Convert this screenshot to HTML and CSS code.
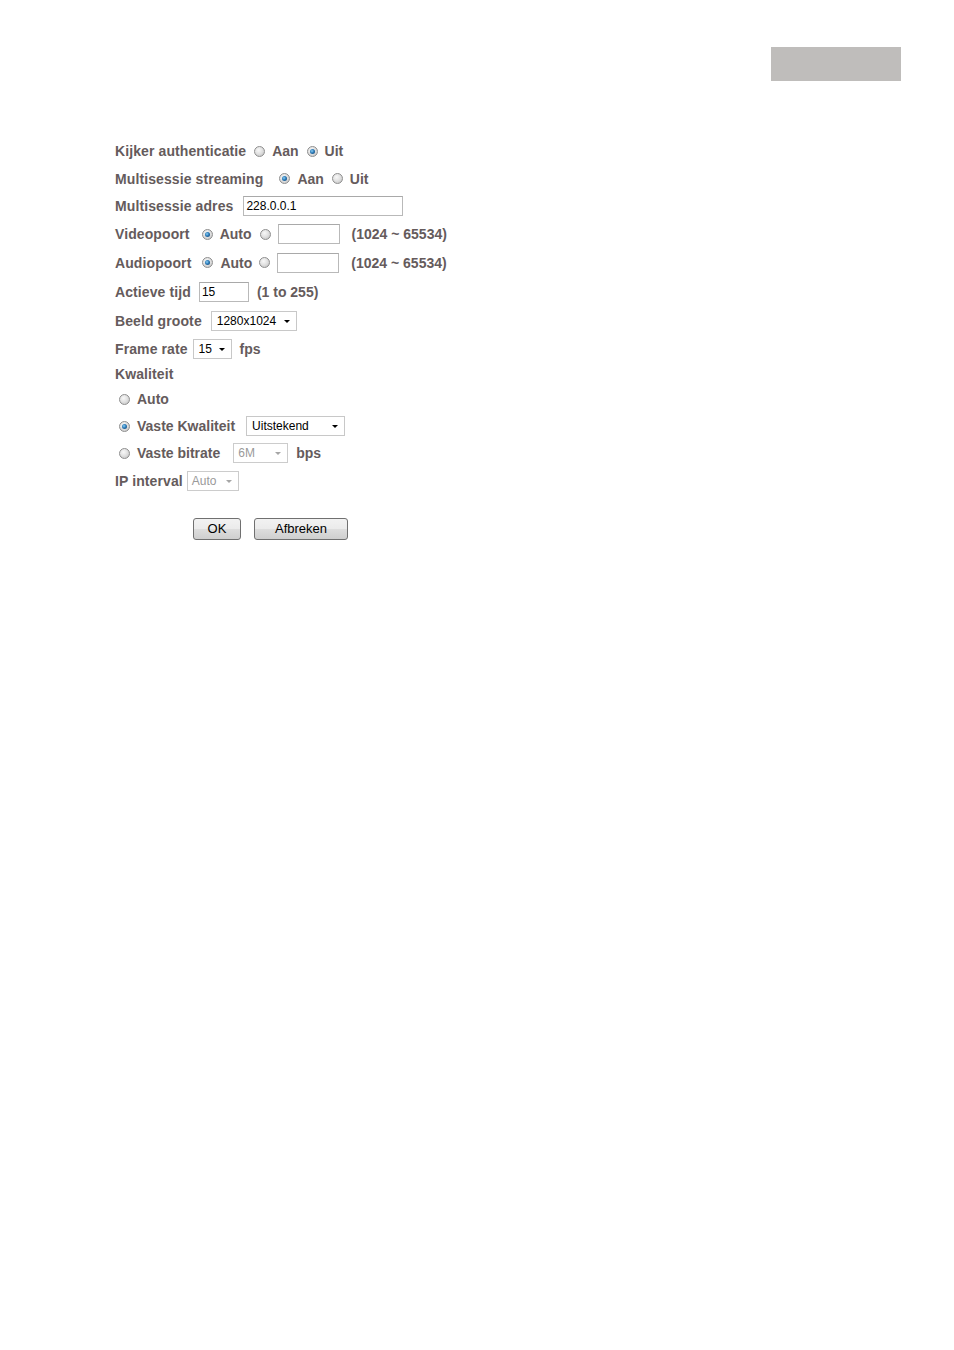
FILE: index.html
```html
<!DOCTYPE html>
<html>
<head>
<meta charset="utf-8">
<title>Streaming</title>
<link rel="stylesheet" href="styles.css">
</head>
<body>
<div class="topbar"><div class="graybox"></div></div>
<div class="form">
  <div class="row r1">
    <span class="lbl">Kijker authenticatie</span>
    <span class="radio m8"></span><span class="opt">Aan</span>
    <span class="radio on m8"></span><span class="opt">Uit</span>
  </div>
  <div class="row r2">
    <span class="lbl">Multisessie streaming</span>
    <span class="radio on m16"></span><span class="opt">Aan</span>
    <span class="radio m8"></span><span class="opt">Uit</span>
  </div>
  <div class="row r3">
    <span class="lbl">Multisessie adres</span>
    <span class="field w160 m10">228.0.0.1</span>
  </div>
  <div class="row r4">
    <span class="lbl">Videopoort</span>
    <span class="radio on m12"></span><span class="opt">Auto</span>
    <span class="radio m8"></span>
    <span class="field w62 m7"></span>
    <span class="opt m12">(1024 ~ 65534)</span>
  </div>
  <div class="row r5">
    <span class="lbl">Audiopoort</span>
    <span class="radio on m11"></span><span class="opt">Auto</span>
    <span class="radio m7"></span>
    <span class="field w62 m7"></span>
    <span class="opt m12">(1024 ~ 65534)</span>
  </div>
  <div class="row r6">
    <span class="lbl">Actieve tijd</span>
    <span class="field w49 m8">15</span>
    <span class="opt m8">(1 to 255)</span>
  </div>
  <div class="row r7">
    <span class="lbl">Beeld groote</span>
    <span class="select w85 m9"><span class="stext">1280x1024</span><span class="arrow"></span></span>
  </div>
  <div class="row r8">
    <span class="lbl">Frame rate</span>
    <span class="select w38 m5"><span class="stext">15</span><span class="arrow"></span></span>
    <span class="opt m8">fps</span>
  </div>
  <div class="row r9">
    <span class="lbl">Kwaliteit</span>
  </div>
  <div class="row r10 sub">
    <span class="radio"></span><span class="opt">Auto</span>
  </div>
  <div class="row r11 sub">
    <span class="radio on"></span><span class="opt">Vaste Kwaliteit</span>
    <span class="select w98 m11"><span class="stext">Uitstekend</span><span class="arrow"></span></span>
  </div>
  <div class="row r12 sub">
    <span class="radio"></span><span class="opt">Vaste bitrate</span>
    <span class="select w54 m13 disabled"><span class="stext">6M</span><span class="arrow"></span></span>
    <span class="opt m8">bps</span>
  </div>
  <div class="row r13">
    <span class="lbl">IP interval</span>
    <span class="select w51 m4 disabled"><span class="stext">Auto</span><span class="arrow"></span></span>
  </div>
  <div class="buttons">
    <button class="btn w48">OK</button>
    <button class="btn w94">Afbreken</button>
  </div>
</div>
</body>
</html>
```
FILE: styles.css
```css
html, body {
  margin: 0;
  padding: 0;
  background: #ffffff;
}
body {
  font-family: "Liberation Sans", Arial, sans-serif;
  width: 954px;
  height: 1350px;
}
.topbar {
  display: flex;
  justify-content: flex-end;
  padding: 47px 53px 0 0;
  height: 34px;
}
.graybox {
  width: 130px;
  height: 34px;
  background: #bfbdbb;
}
.form {
  margin: 56px 0 0 115px;
  display: flex;
  flex-direction: column;
}
.row {
  display: flex;
  align-items: center;
  height: 28px;
  color: #655b5c;
  font-weight: bold;
  font-size: 14px;
  white-space: nowrap;
}
.lbl { letter-spacing: 0.1px; }
.r1 { height: 28px; }
.r2 { height: 27px; }
.r3 { height: 28px; }
.r4 { height: 28px; }
.r5 { height: 29px; }
.r6 { height: 29px; }
.r7 { height: 29px; }
.r8 { height: 28px; }
.r9 { height: 22px; }
.r10 { height: 28px; }
.r11 { height: 26px; }
.r12 { height: 28px; }
.r13 { height: 28px; }
.sub { padding-left: 4px; }
.lbl, .opt { line-height: 16px; }
.radio + .opt { margin-left: 7px; }
.m4 { margin-left: 4px; }
.m5 { margin-left: 5px; }
.m7 { margin-left: 7px; }
.m8 { margin-left: 8px; }
.m9 { margin-left: 9px; }
.m10 { margin-left: 10px; }
.m11 { margin-left: 11px; }
.m12 { margin-left: 12px; }
.m13 { margin-left: 13px; }
.m16 { margin-left: 16px; }
.radio {
  display: inline-block;
  box-sizing: border-box;
  width: 11px;
  height: 11px;
  border-radius: 50%;
  border: 1px solid #8e8e8e;
  background: radial-gradient(circle at 40% 35%, #f8f8f8 0%, #e2e2e2 45%, #bdbdbd 100%);
  position: relative;
  flex: none;
}
.radio.on::after {
  content: "";
  position: absolute;
  left: 2px;
  top: 2px;
  width: 5px;
  height: 5px;
  border-radius: 50%;
  background: radial-gradient(circle at 40% 40%, #8fd0f5 0%, #2a7ab8 45%, #143a63 100%);
}
.field, .select {
  display: inline-flex;
  align-items: center;
  box-sizing: border-box;
  height: 20px;
  border: 1px solid #b9b9b9;
  border-top-color: #a9a9a9;
  background: #ffffff;
  color: #000000;
  font-weight: normal;
  font-size: 12px;
  padding-left: 2px;
  flex: none;
}
.w160 { width: 160px; }
.w62 { width: 62px; }
.w49 { width: 50px; }
.select {
  justify-content: space-between;
  border-color: #c8c8c8;
  padding: 0 6px 0 5px;
}
.w85 { width: 86px; }
.w38 { width: 39px; }
.w98 { width: 99px; }
.w54 { width: 55px; }
.w51 { width: 52px; }
.arrow {
  width: 0;
  height: 0;
  border-left: 3px solid transparent;
  border-right: 3px solid transparent;
  border-top: 3px solid #000000;
  margin-top: 1px;
}
.select.disabled {
  color: #9a9a9a;
  border-color: #cccccc;
  padding-left: 4px;
}
.select.disabled .arrow {
  border-top-color: #a6a6a6;
}
.buttons {
  display: flex;
  gap: 13px;
  margin: 23px 0 0 78px;
}
.btn {
  box-sizing: border-box;
  height: 22px;
  border: 1px solid #707070;
  border-radius: 3px;
  background: linear-gradient(#f2f2f2 0%, #ebebeb 48%, #dddddd 52%, #cfcfcf 100%);
  font-family: "Liberation Sans", Arial, sans-serif;
  font-size: 13px;
  color: #000000;
  padding: 0;
  line-height: 18px;
}
.w48 { width: 48px; }
.w94 { width: 94px; }
```
